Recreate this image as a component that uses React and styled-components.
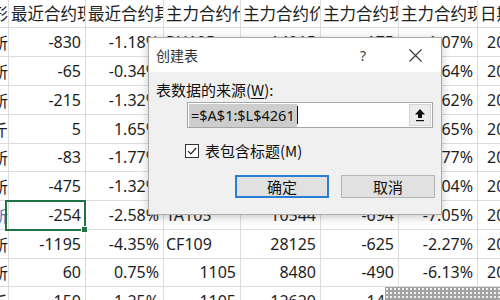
import React from 'react';
import styled, { createGlobalStyle } from 'styled-components';

const Global = createGlobalStyle`
  html, body { margin: 0; padding: 0; background: #fff; overflow: hidden; }
  body { font-family: "Noto Sans", "Noto Sans CJK SC", sans-serif; }
`;

const Stage = styled.div`
  position: relative;
  width: 500px;
  height: 300px;
  overflow: hidden;
  background: #fff;
`;

const Sheet = styled.div`
  display: grid;
  grid-template-columns: 9px 77px 78px 77px 80px 78px 79px 90px;
`;

const Cell = styled.div`
  box-sizing: border-box;
  height: ${(p) => p.$h}px;
  line-height: ${(p) => p.$h - 1}px;
  border-right: 1px solid #dcdcdc;
  border-bottom: 1px solid #dcdcdc;
  font-size: 16px;
  color: #1e1e1e;
  white-space: nowrap;
  overflow: hidden;
  display: flex;
  justify-content: ${(p) => (p.$align === 'right' ? 'flex-end' : 'flex-start')};
  padding: ${(p) => (p.$align === 'right' ? '0 4px 0 2px' : '0 2px 0 2px')};
`;

const EdgeCell = styled(Cell)`
  justify-content: flex-end;
  padding: 0;
  color: ${(p) => (p.$tint ? '#5477b8' : '#1e1e1e')};
  font-family: "Noto Sans CJK SC", sans-serif;
`;

const HeadCell = styled(Cell)`
  font-family: "Noto Sans CJK SC", sans-serif;
  font-size: 16.5px;
  justify-content: flex-start;
  padding: 0 0 0 2px;
`;

const Selection = styled.div`
  position: absolute;
  left: 5px;
  top: 200px;
  width: 81px;
  height: 31px;
  box-sizing: border-box;
  border: 2px solid #217346;
`;

const Handle = styled.div`
  position: absolute;
  right: -4px;
  bottom: -4px;
  width: 5px;
  height: 5px;
  background: #217346;
  border: 1px solid #fff;
`;

const Dots = styled.div`
  position: absolute;
  left: 385px;
  top: 287px;
  right: 0;
  bottom: 0;
  background-color: #a3a3a3;
  background-image: radial-gradient(circle, #f2f2f2 0.9px, transparent 1.2px);
  background-size: 4px 4px;
`;

const Dialog = styled.div`
  position: absolute;
  left: 148px;
  top: 37px;
  width: 294px;
  height: 178px;
  box-sizing: border-box;
  border: 1px solid #ababab;
  box-shadow: 0 2px 9px rgba(0, 0, 0, 0.22);
  background: #f0f0f0;
  display: flex;
  flex-direction: column;
  font-family: "Noto Sans CJK SC", "Noto Sans", sans-serif;
  color: #111;
`;

const TitleBar = styled.div`
  height: 34px;
  flex: none;
  background: #fff;
  display: flex;
  align-items: center;
  padding-left: 7px;
`;

const Title = styled.div`
  flex: 1;
  font-size: 14px;
  color: #333;
`;

const HelpBtn = styled.div`
  width: 30px;
  text-align: center;
  font-size: 14px;
  color: #444;
  font-family: "Noto Sans", sans-serif;
`;

const CloseBtn = styled.div`
  width: 46px;
  margin-left: 14px;
  margin-right: 3px;
  display: flex;
  justify-content: center;
  align-items: center;
`;

const Body = styled.div`
  flex: 1;
  display: flex;
  flex-direction: column;
  padding: 0 6px 0 7px;
`;

const Label = styled.div`
  margin-top: 8px;
  height: 20px;
  line-height: 20px;
  font-size: 15px;
`;

const Key = styled.span`
  text-decoration: underline;
  text-underline-offset: 2px;
`;

const Field = styled.div`
  margin: 2px 0 0 31px;
  width: 246px;
  height: 26px;
  box-sizing: border-box;
  border: 1px solid #a5a5a5;
  background: #fff;
  display: flex;
  align-items: center;
  padding-left: 1px;
`;

const Picked = styled.span`
  background: #cdcdcd;
  height: 23px;
  line-height: 23px;
  padding: 0 2px 0 2px;
  font-size: 14.5px;
  font-family: "Noto Sans", sans-serif;
  color: #111;
`;

const Caret = styled.span`
  width: 1px;
  height: 18px;
  background: #111;
`;

const Spacer = styled.div`
  flex: 1;
`;

const UpBtn = styled.div`
  width: 22px;
  height: 22px;
  margin-right: 1px;
  box-sizing: border-box;
  border: 1px solid #d4d4d4;
  background: #ededed;
  display: flex;
  align-items: center;
  justify-content: center;
`;

const CheckRow = styled.div`
  margin: 15px 0 0 29px;
  display: flex;
  align-items: center;
  gap: 6px;
  font-size: 15px;
  height: 15px;
`;

const Box = styled.div`
  width: 14px;
  height: 14px;
  box-sizing: border-box;
  border: 1px solid #333;
  background: #fff;
  display: flex;
  align-items: center;
  justify-content: center;
`;

const Buttons = styled.div`
  margin-top: 17px;
  display: flex;
  justify-content: flex-end;
  gap: 12px;
`;

const Btn = styled.div`
  width: 94px;
  height: 23px;
  box-sizing: border-box;
  border: 1px solid ${(p) => (p.$primary ? '#2a7fd4' : '#b5b5b5')};
  box-shadow: ${(p) => (p.$primary ? 'inset 0 0 0 1px #2a7fd4' : 'none')};
  background: #e1e1e1;
  display: flex;
  align-items: center;
  justify-content: center;
  font-size: 15px;
`;

const headers = ['形', '最近合约现价涨跌', '最近合约其涨跌幅', '主力合约代码', '主力合约价格', '主力合约现价涨跌', '主力合约现价涨跌幅', '日期'];

const rows = [
  { h: 29, a: '所', v: ['-830', '-1.18%', 'RU105', '14915', '-175', '-1.07%', '2021/3/10'] },
  { h: 29, a: '所', v: ['-65', '-0.34%', 'SR105', '5336', '-88', '-1.64%', '2021/3/10'] },
  { h: 29, a: '所', v: ['-215', '-1.32%', 'AP105', '5410', '-142', '-2.62%', '2021/3/10'] },
  { h: 29, a: '斤', v: ['5', '1.65%', 'CJ105', '9980', '65', '0.65%', '2021/3/10'] },
  { h: 28, a: '所', v: ['-83', '-1.77%', 'ZC105', '4600', '-82', '-1.77%', '2021/3/10'] },
  { h: 29, a: '所', v: ['-475', '-1.32%', 'SM105', '7540', '-230', '-3.04%', '2021/3/10'] },
  { h: 29, a: '所', v: ['-254', '-2.58%', 'TA105', '10544', '-694', '-7.05%', '2021/3/10'], tint: true },
  { h: 29, a: '所', v: ['-1195', '-4.35%', 'CF109', '28125', '-625', '-2.27%', '2021/3/10'] },
  { h: 28, a: '所', v: ['60', '0.75%', '1105', '8480', '-490', '-6.13%', '2021/3/10'] },
  { h: 29, a: '斤', v: ['150', '1.25%', '1105', '12620', '140', '1.12%', '2021/3/10'] },
];

const isNum = (s) => /^-?[\d.,%/]+$/.test(s);

export default function App() {
  return (
    <Stage>
      <Global />
      <Sheet>
        {headers.map((t, i) => (
          i === 0
            ? <EdgeCell key={i} $h={28} $align="right">{t}</EdgeCell>
            : <HeadCell key={i} $h={28}>{t}</HeadCell>
        ))}
        {rows.map((r, ri) => (
          <React.Fragment key={ri}>
            <EdgeCell $h={r.h} $align="right" $tint={r.tint}>{r.a}</EdgeCell>
            {r.v.map((v, ci) => (
              <Cell key={ci} $h={r.h} $align={isNum(v) ? 'right' : 'left'}>{v}</Cell>
            ))}
          </React.Fragment>
        ))}
      </Sheet>
      <Selection>
        <Handle />
      </Selection>
      <Dots />
      <Dialog>
        <TitleBar>
          <Title>创建表</Title>
          <HelpBtn>?</HelpBtn>
          <CloseBtn>
            <svg width="13" height="13" viewBox="0 0 13 13">
              <path d="M0.5 0.5 L12.5 12.5 M12.5 0.5 L0.5 12.5" stroke="#333" strokeWidth="1.1" fill="none" />
            </svg>
          </CloseBtn>
        </TitleBar>
        <Body>
          <Label>表数据的来源(<Key>W</Key>):</Label>
          <Field>
            <Picked>=$A$1:$L$4261</Picked>
            <Caret />
            <Spacer />
            <UpBtn>
              <svg width="12" height="14" viewBox="0 0 12 14">
                <path d="M6 1 L11 6.5 L8 6.5 L8 10 L4 10 L4 6.5 L1 6.5 Z" fill="#111" />
                <rect x="2" y="12" width="8" height="1.2" fill="#111" />
              </svg>
            </UpBtn>
          </Field>
          <CheckRow>
            <Box>
              <svg width="12" height="12" viewBox="0 0 12 12">
                <path d="M2 6.2 L4.8 9 L10.2 3" stroke="#222" strokeWidth="1.2" fill="none" />
              </svg>
            </Box>
            <span>表包含标题(M)</span>
          </CheckRow>
          <Buttons>
            <Btn $primary>确定</Btn>
            <Btn>取消</Btn>
          </Buttons>
        </Body>
      </Dialog>
    </Stage>
  );
}
